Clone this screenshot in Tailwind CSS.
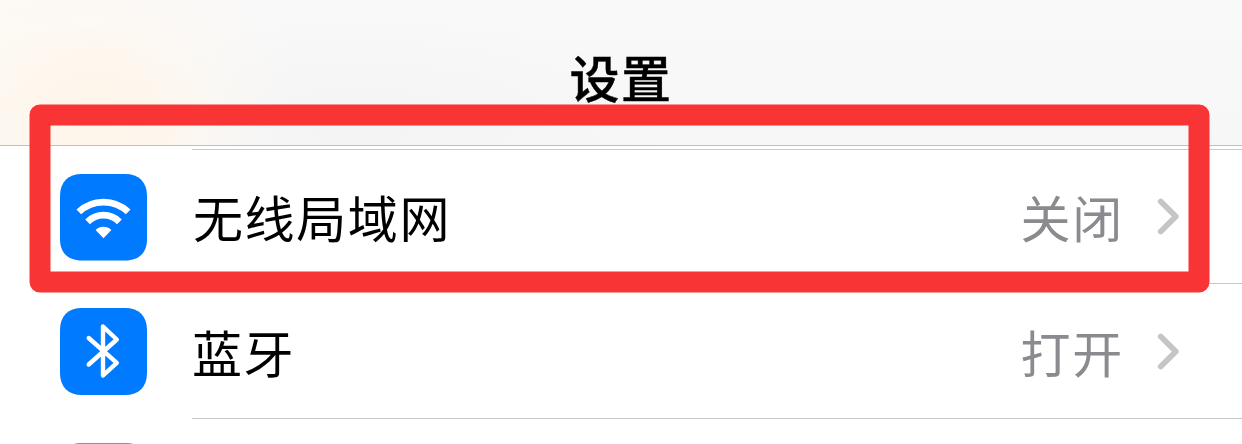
<!DOCTYPE html>
<html lang="zh-CN">
<head>
<meta charset="utf-8">
<title>设置</title>
<script src="https://cdn.jsdelivr.net/npm/@tailwindcss/browser@4"></script>
</head>
<body class="relative h-[444px] w-[1242px] overflow-hidden bg-white font-['Noto_Sans_CJK_SC',sans-serif] text-black">
  <header class="flex h-[146px] items-end justify-center border-b border-[#bfbfc1] bg-[radial-gradient(ellipse_200px_160px_at_95px_120px,#fff5ea_0%,#fff6ebc0_35%,#fdf8f170_65%,#f9f8f600_100%),radial-gradient(ellipse_300px_200px_at_0px_40px,#fdfaf4_0%,#fbfaf700_100%),radial-gradient(ellipse_300px_110px_at_360px_130px,#f4f4f5_0%,#f6f6f700_100%),linear-gradient(to_bottom,#f9f9fa,#f7f7f8)] pb-[31px]">
    <h1 class="text-[50px] leading-[75px] font-medium tracking-[1.5px] [-webkit-text-stroke:0.4px_black]">设置</h1>
  </header>
  <main>
    <div class="ml-[192px] h-1 border-b border-[#cbcbcd]"></div>
    <section class="flex h-[134px] pl-[60px]">
      <div class="flex w-[132px] shrink-0 items-center">
        <svg class="h-[87px] w-[87px]" viewBox="0 0 87 87" fill="none">
          <path d="M22 0H65C79 0 87 8 87 22V65C87 79 79 86.5 65 86.5H22C8 86.5 0 79 0 65V22C0 8 8 0 22 0Z" fill="#007aff"/>
          <path d="M18.8 37.9A36 36 0 0 1 68.2 37.9M27.6 47.8A22.5 22.5 0 0 1 59.4 47.8" stroke="#fff" stroke-width="6.7"/>
          <path d="M35.6 56A11.5 11.5 0 0 1 51.4 56L43.5 64.2Z" fill="#fff"/>
        </svg>
      </div>
      <div class="flex flex-1 items-center border-b border-[#c8c7cc] pr-[62px]">
        <span class="flex-1 pl-px text-[50px] leading-[75px] tracking-[1.6px]">无线局域网</span>
        <span class="text-[50px] leading-[75px] tracking-[1.8px] text-[#8a8a8f]">关闭</span>
        <svg class="ml-[32px] h-[37px] w-[24px]" viewBox="0 0 24 37" fill="none" stroke="#c5c5c8" stroke-width="5.8" stroke-linecap="round" stroke-linejoin="round"><path d="M4.7 3.5L19.8 18.5L4.7 33.5"/></svg>
      </div>
    </section>
    <section class="flex h-[135px] pl-[60px]">
      <div class="flex w-[132px] shrink-0 items-center">
        <svg class="h-[87px] w-[87px]" viewBox="0 0 87 87" fill="none">
          <path d="M22 0H65C79 0 87 8 87 22V65C87 79 79 87 65 87H22C8 87 0 79 0 65V22C0 8 8 0 22 0Z" fill="#007aff"/>
          <path d="M28.7 30L56.8 54.8L43 67.5V18.5L56.8 31.5L28.7 56.5" stroke="#fff" stroke-width="4.4" stroke-linecap="round" stroke-linejoin="round"/>
        </svg>
      </div>
      <div class="flex flex-1 items-center border-b border-[#c8c7cc] pr-[62px]">
        <span class="flex-1 text-[50px] leading-[75px] tracking-[1.6px]">蓝牙</span>
        <span class="text-[50px] leading-[75px] tracking-[1.8px] text-[#8a8a8f]">打开</span>
        <svg class="ml-[32px] h-[37px] w-[24px]" viewBox="0 0 24 37" fill="none" stroke="#c5c5c8" stroke-width="5.8" stroke-linecap="round" stroke-linejoin="round"><path d="M4.7 3.5L19.8 18.5L4.7 33.5"/></svg>
      </div>
    </section>
    <section class="h-[25px] overflow-hidden pt-6 pl-[60px]">
      <div class="h-[87px] w-[87px] rounded-[20px] bg-[#34c759]"></div>
    </section>
  </main>
  <svg class="absolute inset-0 h-[444px] w-[1242px]" viewBox="0 0 1242 444" fill="none"><rect x="40" y="115" width="1159" height="167" stroke="#f83434" stroke-width="21" stroke-linejoin="round"/></svg>
</body>
</html>
